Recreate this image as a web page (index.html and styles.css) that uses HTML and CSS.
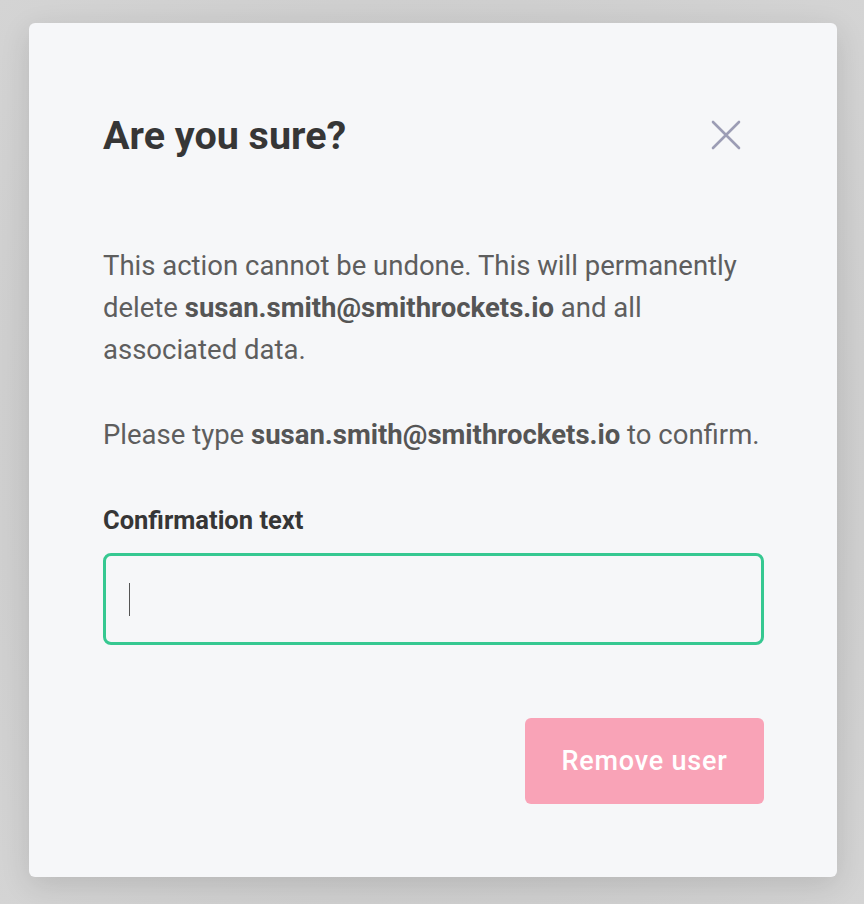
FILE: index.html
```html
<!DOCTYPE html>
<html lang="en">
<head>
<meta charset="utf-8">
<title>Are you sure?</title>
<link rel="stylesheet" href="styles.css">
</head>
<body>
<div class="backdrop">
  <div class="modal">
    <div class="modal-header">
      <h2 class="title">Are you sure?</h2>
      <button class="close" aria-label="Close">
        <svg width="30" height="30" viewBox="0 0 30 30"><path d="M2 2 L28 28 M28 2 L2 28" stroke="#9c9db5" stroke-width="2.6" stroke-linecap="round" fill="none"/></svg>
      </button>
    </div>
    <p class="text">This action cannot be undone. This will permanently delete <b>susan.smith@smithrockets.io</b> and all associated data.</p>
    <p class="text">Please type <b>susan.smith@smithrockets.io</b> to confirm.</p>
    <label class="label" for="confirm">Confirmation text</label>
    <div class="input"><span class="caret"></span></div>
    <div class="actions">
      <button class="remove">Remove user</button>
    </div>
  </div>
</div>
</body>
</html>
```
FILE: styles.css
```css
html, body {
  margin: 0;
  padding: 0;
}
body {
  background: #cfcfcf;
  font-family: Roboto, "Liberation Sans", sans-serif;
}
.backdrop {
  width: 864px;
  height: 904px;
  box-sizing: border-box;
  padding: 23px 27px 27px 29px;
  background: radial-gradient(ellipse at center, #c4c4c4 0%, #cdcdcd 60%, #d4d4d4 100%);
}
.modal {
  width: 808px;
  height: 854px;
  box-sizing: border-box;
  background: #f6f7f9;
  border-radius: 6px;
  box-shadow: 0 8px 30px rgba(0,0,0,0.12);
  padding: 0 73px 0 74px;
  display: flex;
  flex-direction: column;
}
.modal-header {
  display: flex;
  justify-content: space-between;
  align-items: center;
  height: 80px;
  margin-top: 72px;
}
.title {
  margin: 0;
  font-size: 39.5px;
  font-weight: 700;
  color: #363636;
  letter-spacing: 0;
}
.close {
  border: 0;
  background: none;
  padding: 0;
  width: 30px;
  height: 30px;
  margin-right: 23px;
  display: flex;
}
.text {
  margin: 70px 0 0;
  font-size: 27.5px;
  line-height: 42px;
  color: #5e5e5e;
}
.text + .text {
  margin-top: 43px;
}
.text b {
  font-weight: 700;
  color: #555;
}
.label {
  margin-top: 49px;
  font-size: 25.5px;
  font-weight: 700;
  color: #363636;
}
.input {
  margin-top: 18px;
  height: 92px;
  box-sizing: border-box;
  border: 3px solid #36c891;
  border-radius: 8px;
  display: flex;
  align-items: center;
  padding-left: 23px;
}
.caret {
  width: 1px;
  height: 33px;
  background: #555;
}
.actions {
  display: flex;
  justify-content: flex-end;
  margin-top: 73px;
}
.remove {
  width: 239px;
  height: 86px;
  border: 0;
  border-radius: 6px;
  background: #f9a3b7;
  color: #fff;
  font-family: Roboto, "Liberation Sans", sans-serif;
  font-size: 27px;
  font-weight: 500;
  letter-spacing: 0.8px;
}
```
